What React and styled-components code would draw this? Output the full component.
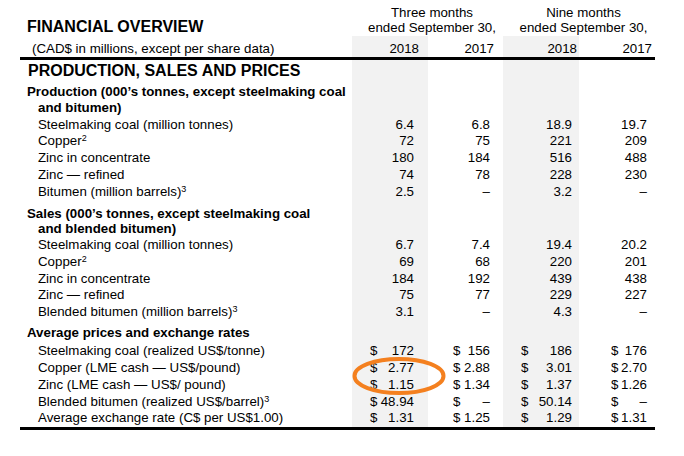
import React from 'react';
import styled, { createGlobalStyle } from 'styled-components';

const cols = [
  { shaded: true, padL: 18, padR: 14, yearPad: 9 },
  { shaded: false, padL: 25, padR: 13, yearPad: 9 },
  { shaded: true, padL: 18, padR: 7, yearPad: 2 },
  { shaded: false, padL: 32, padR: 8, yearPad: 3 },
];

const sections = [
  {
    head: ['Production (000\u2019s tonnes, except steelmaking coal', 'and bitumen)'],
    top: 1, lh: 16, bottom: 0.5,
    rows: [
      { label: 'Steelmaking coal (million tonnes)', values: ['6.4', '6.8', '18.9', '19.7'] },
      { label: 'Copper', sup: '2', values: ['72', '75', '221', '209'] },
      { label: 'Zinc in concentrate', values: ['180', '184', '516', '488'] },
      { label: 'Zinc \u2014 refined', values: ['74', '78', '228', '230'] },
      { label: 'Bitumen (million barrels)', sup: '3', values: ['2.5', '\u2013', '3.2', '\u2013'] },
    ],
  },
  {
    head: ['Sales (000\u2019s tonnes, except steelmaking coal', 'and blended bitumen)'],
    top: 5.5, lh: 15, bottom: 1,
    rows: [
      { label: 'Steelmaking coal (million tonnes)', values: ['6.7', '7.4', '19.4', '20.2'] },
      { label: 'Copper', sup: '2', values: ['69', '68', '220', '201'] },
      { label: 'Zinc in concentrate', values: ['184', '192', '439', '438'] },
      { label: 'Zinc \u2014 refined', values: ['75', '77', '229', '227'] },
      { label: 'Blended bitumen (million barrels)', sup: '3', values: ['3.1', '\u2013', '4.3', '\u2013'] },
    ],
  },
  {
    head: ['Average prices and exchange rates'],
    top: 4.5, lh: 16.8, bottom: 1,
    money: true,
    rows: [
      { label: 'Steelmaking coal (realized US$/tonne)', values: ['172', '156', '186', '176'] },
      { label: 'Copper (LME cash \u2014 US$/pound)', values: ['2.77', '2.88', '3.01', '2.70'] },
      { label: 'Zinc (LME cash \u2014 US$/ pound)', values: ['1.15', '1.34', '1.37', '1.26'] },
      { label: 'Blended bitumen (realized US$/barrel)', sup: '3', values: ['48.94', '\u2013', '50.14', '\u2013'] },
      { label: 'Average exchange rate (C$ per US$1.00)', values: ['1.31', '1.25', '1.29', '1.31'] },
    ],
  },
];

function App() {
  return (
    <Page>
      <GlobalStyle />
      <HeadTop>
        <Title>FINANCIAL OVERVIEW</Title>
        <Period>Three months<br />ended September 30,</Period>
        <Period>Nine months<br />ended September 30,</Period>
      </HeadTop>
      <HeadYears>
        <Units>(CAD$ in millions, except per share data)</Units>
        {['2018', '2017', '2018', '2017'].map((y, i) => (
          <Year key={i} $shaded={cols[i].shaded} $padR={cols[i].yearPad}>{y}</Year>
        ))}
      </HeadYears>
      <Body>
        <Row>
          <Heading>PRODUCTION, SALES AND PRICES</Heading>
          {cols.map((c, i) => <Value key={i} $shaded={c.shaded} />)}
        </Row>
        {sections.map((s, si) => (
          <React.Fragment key={si}>
            <Row>
              <SectionLabel $top={s.top} $lh={s.lh} $bottom={s.bottom}>
                {s.head.map((line, li) => (
                  <HeadLine key={li} $wrapped={li > 0}>{line}</HeadLine>
                ))}
              </SectionLabel>
              {cols.map((c, i) => <Value key={i} $shaded={c.shaded} />)}
            </Row>
            {s.rows.map((r, ri) => (
              <Row key={ri}>
                <Label>
                  {r.label}
                  {r.sup && <Sup>{r.sup}</Sup>}
                </Label>
                {r.values.map((v, i) =>
                  s.money ? (
                    <Money key={i} $shaded={cols[i].shaded} $padL={cols[i].padL} $padR={cols[i].padR}>
                      <span>$</span>
                      <span>{v}</span>
                    </Money>
                  ) : (
                    <Value key={i} $shaded={cols[i].shaded} $padR={cols[i].padR}>{v}</Value>
                  )
                )}
              </Row>
            ))}
          </React.Fragment>
        ))}
      </Body>
      <Circle width="98" height="42" viewBox="0 0 98 42">
        <ellipse cx="49" cy="21" rx="44.5" ry="17" fill="none" stroke="#f4801f" strokeWidth="4" />
      </Circle>
    </Page>
  );
}

const GlobalStyle = createGlobalStyle`
  body {
    margin: 0;
    background: #fff;
    color: #000;
    font-family: "Liberation Sans", Arial, sans-serif;
  }
`;

const Page = styled.div`
  position: relative;
  width: 684px;
  height: 456px;
  padding-left: 20px;
  box-sizing: border-box;
  overflow: hidden;
  font-size: 13.3px;
`;

const Grid = styled.div`
  display: grid;
  grid-template-columns: 332px 76px 75px 76px 76px;
  width: 635px;
`;

const HeadTop = styled(Grid)`
  height: 36px;
`;

const Title = styled.div`
  align-self: end;
  padding-left: 7px;
  font-size: 16px;
  font-weight: bold;
  line-height: 18px;
  white-space: nowrap;
`;

const Period = styled.div`
  grid-column: span 2;
  text-align: center;
  padding: 5px 0 0 9px;
  line-height: 15px;
  white-space: nowrap;
`;

const HeadYears = styled(Grid)`
  border-bottom: 3px solid #000;
  line-height: 17px;
`;

const Units = styled.div`
  padding: 4px 0 0 12px;
  white-space: nowrap;
`;

const Year = styled.div`
  padding: 4px ${p => p.$padR}px 0 0;
  text-align: right;
  background: ${p => (p.$shaded ? '#f2f2f2' : 'transparent')};
`;

const Body = styled.div`
  width: 635px;
  border-bottom: 3px solid #000;
`;

const Row = styled(Grid)`
  line-height: 16.8px;
`;

const Heading = styled.div`
  padding: 0 0 2px 8px;
  font-size: 16px;
  font-weight: bold;
  line-height: 21px;
  white-space: nowrap;
`;

const SectionLabel = styled.div`
  padding: ${p => p.$top}px 0 ${p => p.$bottom}px 7px;
  font-weight: bold;
  line-height: ${p => p.$lh}px;
`;

const HeadLine = styled.div`
  white-space: nowrap;
  padding-left: ${p => (p.$wrapped ? '11px' : '0')};
`;

const Label = styled.div`
  padding-left: 18px;
  white-space: nowrap;
`;

const Sup = styled.sup`
  font-size: 9px;
  line-height: 0;
  vertical-align: 4px;
`;

const Value = styled.div`
  text-align: right;
  padding-right: ${p => p.$padR || 0}px;
  background: ${p => (p.$shaded ? '#f2f2f2' : 'transparent')};
`;

const Money = styled.div`
  display: flex;
  justify-content: space-between;
  padding: 0 ${p => p.$padR}px 0 ${p => p.$padL}px;
  background: ${p => (p.$shaded ? '#f2f2f2' : 'transparent')};
`;

const Circle = styled.svg`
  position: absolute;
  left: 350px;
  top: 355px;
`;

export default App;
